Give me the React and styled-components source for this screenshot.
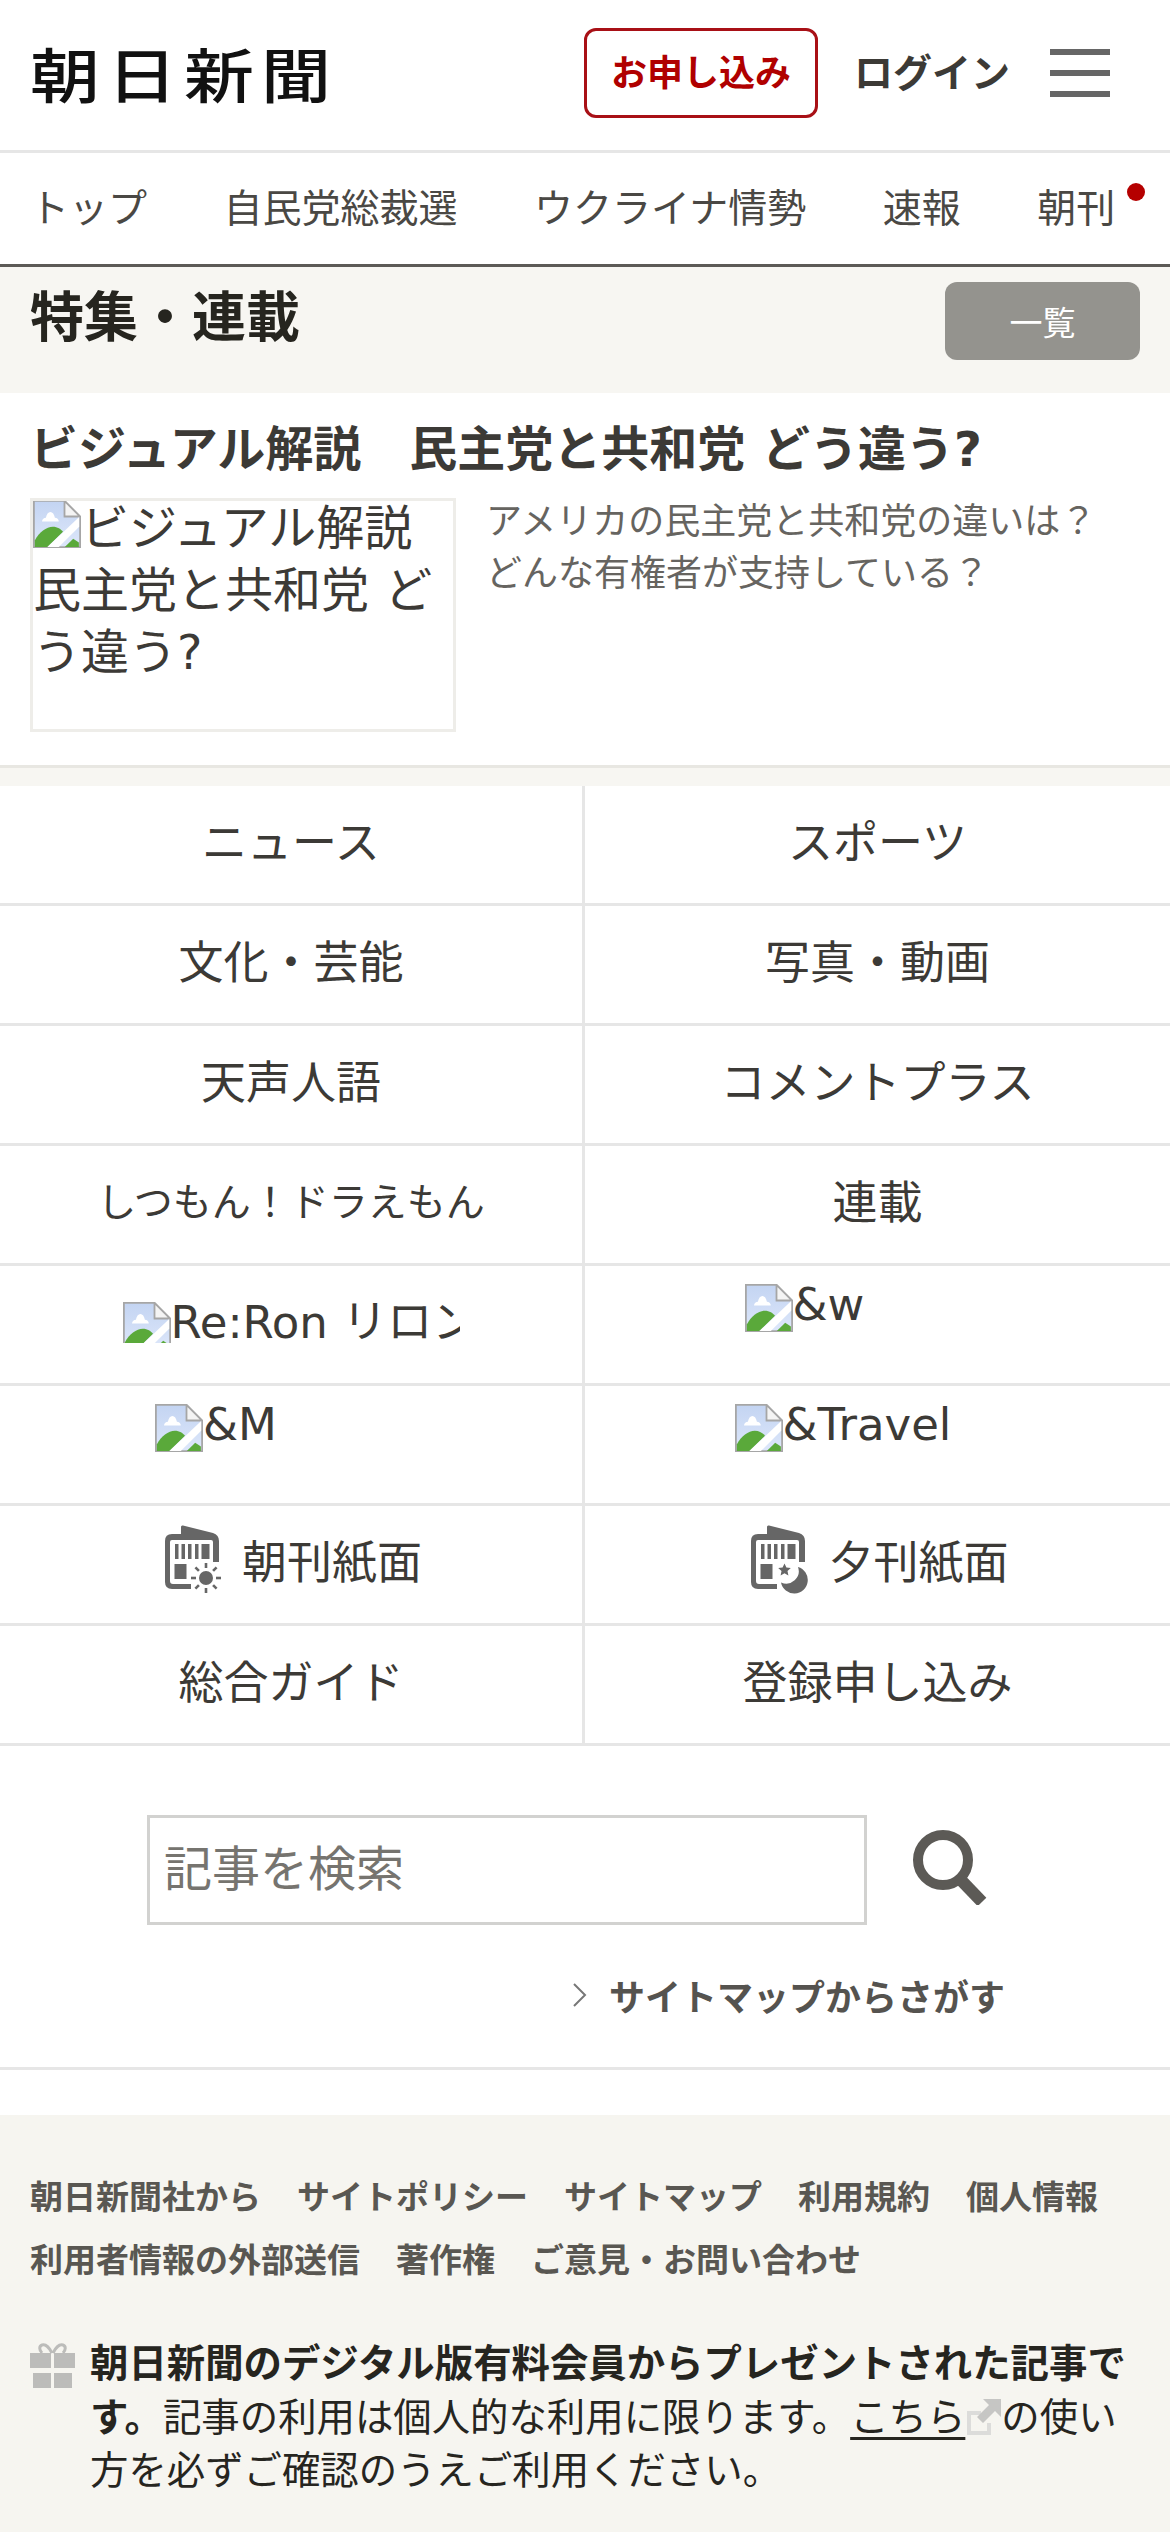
import React from "react";
import styled, { createGlobalStyle } from "styled-components";

const Global = createGlobalStyle`
  html, body { margin: 0; padding: 0; background: #fff; }
  body { font-family: "DejaVu Sans", "Noto Sans CJK JP", sans-serif; color: #3c3a36; }
  * { box-sizing: border-box; }
`;
const Page = styled.div`width: 1170px; height: 2532px; overflow: hidden; background: #fff;`;
const Header = styled.header`height: 153px; border-bottom: 3px solid #e6e6e6; display: flex; align-items: center; padding: 0 60px 4px 30px;`;
const Logo = styled.div`font-family: "Noto Sans CJK JP", serif; font-size: 70px; font-weight: 500; letter-spacing: 7px; line-height: 1; color: #111; white-space: nowrap; margin-right: auto; transform: scaleY(0.84);`;
const Apply = styled.a`width: 234px; height: 90px; border: 3px solid #a81016; border-radius: 12px; display: flex; align-items: center; justify-content: center; padding-bottom: 6px; color: #b00000; font-size: 36px; font-weight: 700; margin-right: 36px;`;
const Login = styled.a`font-size: 39px; font-weight: 700; color: #3c3a36; margin-right: 40px; padding-bottom: 6px;`;
const Burger = styled.div`width: 60px; height: 48px; display: flex; flex-direction: column; justify-content: space-between; span { height: 6px; background: #666; display: block; }`;
const Nav = styled.nav`height: 114px; border-bottom: 3px solid #5c5a56; display: flex; align-items: center; padding: 0 0 8px 30px; gap: 76.5px; font-size: 39px; color: #4a4844; white-space: nowrap;`;
const NavItem = styled.a`position: relative; &[data-dot]::after { content: ""; position: absolute; right: -30px; top: 6px; width: 18px; height: 18px; border-radius: 50%; background: #b50000; }`;
const SectionHead = styled.div`height: 126px; background: #f7f6f2; display: flex; justify-content: space-between; align-items: flex-start; padding: 15px 30px 0;`;
const SectionTitle = styled.h2`margin: 1px 0 0; font-size: 54px; font-weight: 700; line-height: 72px; color: #26251f;`;
const ListBtn = styled.a`width: 195px; height: 78px; border-radius: 12px; background: #94938e; color: #fff; font-size: 33px; display: flex; align-items: center; justify-content: center;`;
const Feature = styled.section`padding: 23px 30px 0; height: 375px; border-bottom: 3px solid #e8e7e2;`;
const FeatureTitle = styled.h3`margin: 0 0 16px; font-size: 48px; font-weight: 700; line-height: 66px; color: #3c3a36; white-space: pre;`;
const FeatureBody = styled.div`display: flex; gap: 30px;`;
const Thumb = styled.div`width: 426px; height: 234px; border: 3px solid #eeede9; font-size: 48px; line-height: 62px; color: #3c3a36; flex: none; overflow: hidden;`;
const ThumbText = styled.div`margin-top: -4px;`;
const FeatureText = styled.p`margin: -2px 0 0; font-size: 36px; line-height: 52px; color: #666460; white-space: pre-line;`;
const Spacer = styled.div`height: 18px; background: #f7f6f2;`;
const Grid = styled.div`display: grid; grid-template-columns: 585px 585px; grid-auto-rows: 120px;`;
const Cell = styled.a`display: flex; align-items: center; justify-content: center; padding-bottom: 11px; border-bottom: 3px solid #e6e6e6; font-size: ${p => p.$small ? 39 : 45}px; color: #3c3a36; gap: 18px; &:nth-child(odd) { border-right: 3px solid #e6e6e6; }`;
const PaperCell = styled(Cell)`gap: 20px; padding-left: 5px;`;
const AltCell = styled(Cell)`align-items: flex-start; padding: ${p => p.$pad}px 0 0;`;
const AltBox = styled.span`display: flex; align-items: flex-start; width: ${p => p.$w}px; height: ${p => p.$h || 48}px; line-height: 42px; overflow: hidden; white-space: nowrap;`;
const Search = styled.div`height: 324px; border-bottom: 3px solid #e6e6e6; display: flex; flex-direction: column;`;
const SearchRow = styled.div`display: flex; align-items: flex-start; padding: 69px 0 0 147px; gap: 45px;`;
const Input = styled.div`width: 720px; height: 110px; border: 3px solid #d2d2d0; display: flex; align-items: center; padding: 0 0 10px 14px; font-size: 48px; color: #76746f;`;
const SearchIcon = styled.svg`margin-top: 15px; flex: none;`;
const MapLink = styled.a`display: flex; align-items: center; margin: 44px 0 0 572px; font-size: 36px; font-weight: 700; color: #55534f; gap: 22px;`;
const Footer = styled.footer`margin-top: 45px; background: #f6f5f0; padding: 51px 30px 0; height: 420px;`;
const FootLinks = styled.div`display: flex; flex-wrap: wrap; column-gap: 36px; font-size: 33px; font-weight: 700; line-height: 63px; color: #595752;`;
const Gift = styled.div`display: flex; gap: 15px; margin-top: 45px;`;
const GiftIcon = styled.svg`flex: none; margin-top: 6px;`;
const GiftText = styled.p`margin: 0; font-size: 38.4px; line-height: 53.500px; color: #26251f; b { font-weight: 700; } a { text-decoration: underline; text-underline-offset: 6px; }`;
const ExtIcon = styled.svg`vertical-align: -4px;`;
const BrokenSvg = styled.svg`flex: none; vertical-align: -3px;`;

const Broken = () => (
  <BrokenSvg width="48" height="48" viewBox="0 0 16 16">
    <defs>
      <linearGradient id="sky" x1="0" y1="0" x2="0" y2="1">
        <stop offset="0" stopColor="#c3d4f2" />
        <stop offset="1" stopColor="#dde7fa" />
      </linearGradient>
    </defs>
    <path d="M.3.3h10.200l5.200 5.200v10.200H.3z" fill="url(#sky)" stroke="#a6a6a6" strokeWidth=".6" />
    <path d="M10.500.3v5.200h5.200z" fill="#f4f4f4" stroke="#a6a6a6" strokeWidth=".6" />
    <path d="M3 7.200c0-.9.7-1.300 1.300-1.300.2-1.100.8-1.900 1.500-1.900s1.300.8 1.500 1.900c.7 0 1.300.4 1.300 1.300z" fill="#fff" />
    <path d="M.6 15.700v-2.200c1.400-2.800 3.900-4.600 6-4.600 1.600 0 2.700.8 3.400 1.700l-5.200 5.100z" fill="#5aa93a" />
    <path d="M10.600 15.700l2.800-2.800 1.900 1.300v1.500z" fill="#5aa93a" />
    <path d="M4.800 15.700l10.600-10v3.200l-6.800 6.800z" fill="#fff" />
  </BrokenSvg>
);
const Paper = ({ evening }) => (
  <svg width="57" height="69" viewBox="0 0 57 69" style={{ flex: "none" }}>
    <path d="M16 9V2Q16 0 18 .5L48 8Q54 10 54 16V37H48V17Q48 15 46 15H7Q5 15 5 17V56Q5 59 8 59H26V64H7Q0 64 0 57V16Q0 9 7 9Z" fill="#666" />
    {[10, 16.5, 23, 30].map(x => <rect key={x} x={x} y="19" width="3.500" height="15" fill="#666" />)}
    <rect x="36.500" y="19" width="8" height="15" fill="#666" />
    <rect x="9.500" y="39" width="12" height="15" fill="#666" />
    {evening ? (
      <>
        <path d="M33.500 38.500l1.900 4.100 4.400.5-3.300 3 .9 4.400-3.900-2.200-3.900 2.200.9-4.400-3.300-3 4.400-.5z" fill="#666" />
        <path d="M47 42A13.500 13.500 0 1 1 30 57.500A12.500 12.500 0 0 0 47 42z" fill="#666" />
      </>
    ) : (
      <>
        <circle cx="41" cy="53" r="7" fill="#666" />
        {[0, 45, 90, 135, 180, 225, 270, 315].map(a => <rect key={a} x="39.700" y="38" width="2.600" height="5" fill="#666" transform={`rotate(${a} 41 53)`} />)}
      </>
    )}
  </svg>
);

export default function App() {
  return (
    <Page>
      <Global />
      <Header>
        <Logo>朝日新聞</Logo>
        <Apply>お申し込み</Apply>
        <Login>ログイン</Login>
        <Burger><span /><span /><span /></Burger>
      </Header>
      <Nav>
        <NavItem>トップ</NavItem>
        <NavItem>自民党総裁選</NavItem>
        <NavItem>ウクライナ情勢</NavItem>
        <NavItem>速報</NavItem>
        <NavItem data-dot>朝刊</NavItem>
      </Nav>
      <SectionHead>
        <SectionTitle>特集・連載</SectionTitle>
        <ListBtn>一覧</ListBtn>
      </SectionHead>
      <Feature>
        <FeatureTitle>ビジュアル解説　民主党と共和党 どう違う?</FeatureTitle>
        <FeatureBody>
          <Thumb><ThumbText><Broken />ビジュアル解説　民主党と共和党 どう違う?</ThumbText></Thumb>
          <FeatureText>{"アメリカの民主党と共和党の違いは？\nどんな有権者が支持している？"}</FeatureText>
        </FeatureBody>
      </Feature>
      <Spacer />
      <Grid>
        <Cell>ニュース</Cell>
        <Cell>スポーツ</Cell>
        <Cell>文化・芸能</Cell>
        <Cell>写真・動画</Cell>
        <Cell>天声人語</Cell>
        <Cell>コメントプラス</Cell>
        <Cell $small>しつもん！ドラえもん</Cell>
        <Cell>連載</Cell>
        <AltCell $pad={36}><AltBox $w={337} $h={41}><Broken />Re:Ron リロン</AltBox></AltCell>
        <AltCell $pad={18}><AltBox $w={266}><Broken />&amp;w</AltBox></AltCell>
        <AltCell $pad={18}><AltBox $w={272}><Broken />&amp;M</AltBox></AltCell>
        <AltCell $pad={18}><AltBox $w={286}><Broken />&amp;Travel</AltBox></AltCell>
        <PaperCell><Paper />朝刊紙面</PaperCell>
        <PaperCell><Paper evening />夕刊紙面</PaperCell>
        <Cell>総合ガイド</Cell>
        <Cell>登録申し込み</Cell>
      </Grid>
      <Search>
        <SearchRow>
          <Input>記事を検索</Input>
          <SearchIcon width="76" height="75" viewBox="0 0 76 75">
            <circle cx="31" cy="30" r="25" fill="none" stroke="#5c5a56" strokeWidth="10" />
            <path d="M47 48l23 24" stroke="#5c5a56" strokeWidth="12" />
          </SearchIcon>
        </SearchRow>
        <MapLink>
          <svg width="15" height="24" viewBox="0 0 15 24"><path d="M2 1l11 11L2 23" fill="none" stroke="#777" strokeWidth="2" /></svg>
          サイトマップからさがす
        </MapLink>
      </Search>
      <Footer>
        <FootLinks>
          <a>朝日新聞社から</a><a>サイトポリシー</a><a>サイトマップ</a><a>利用規約</a><a>個人情報</a><a>利用者情報の外部送信</a><a>著作権</a><a>ご意見・お問い合わせ</a>
        </FootLinks>
        <Gift>
          <GiftIcon width="45" height="45" viewBox="0 0 45 45">
            <path d="M22 10C19 4 15 1 12 2 9 3 9 7 12 10M23 10C26 4 30 1 33 2 36 3 36 7 33 10" fill="none" stroke="#bcbcba" strokeWidth="3" />
            <path d="M0 10h21v15H0zM24 10h21v15H24zM3 30h18v15H3zM24 30h18v15H24z" fill="#bcbcba" />
          </GiftIcon>
          <GiftText>
            <b>朝日新聞のデジタル版有料会員からプレゼントされた記事です。</b>記事の利用は個人的な利用に限ります。<a>こちら</a>
            <ExtIcon width="36" height="36" viewBox="0 0 36 36">
              <path d="M2 12h14v4H6v16h16V24h4v12H2z" fill="#dcdcda" />
              <path d="M18 0h18v18l-6-6-12 12-6-6 12-12z" fill="#c6c6c4" />
            </ExtIcon>
            の使い方を必ずご確認のうえご利用ください。
          </GiftText>
        </Gift>
      </Footer>
    </Page>
  );
}
